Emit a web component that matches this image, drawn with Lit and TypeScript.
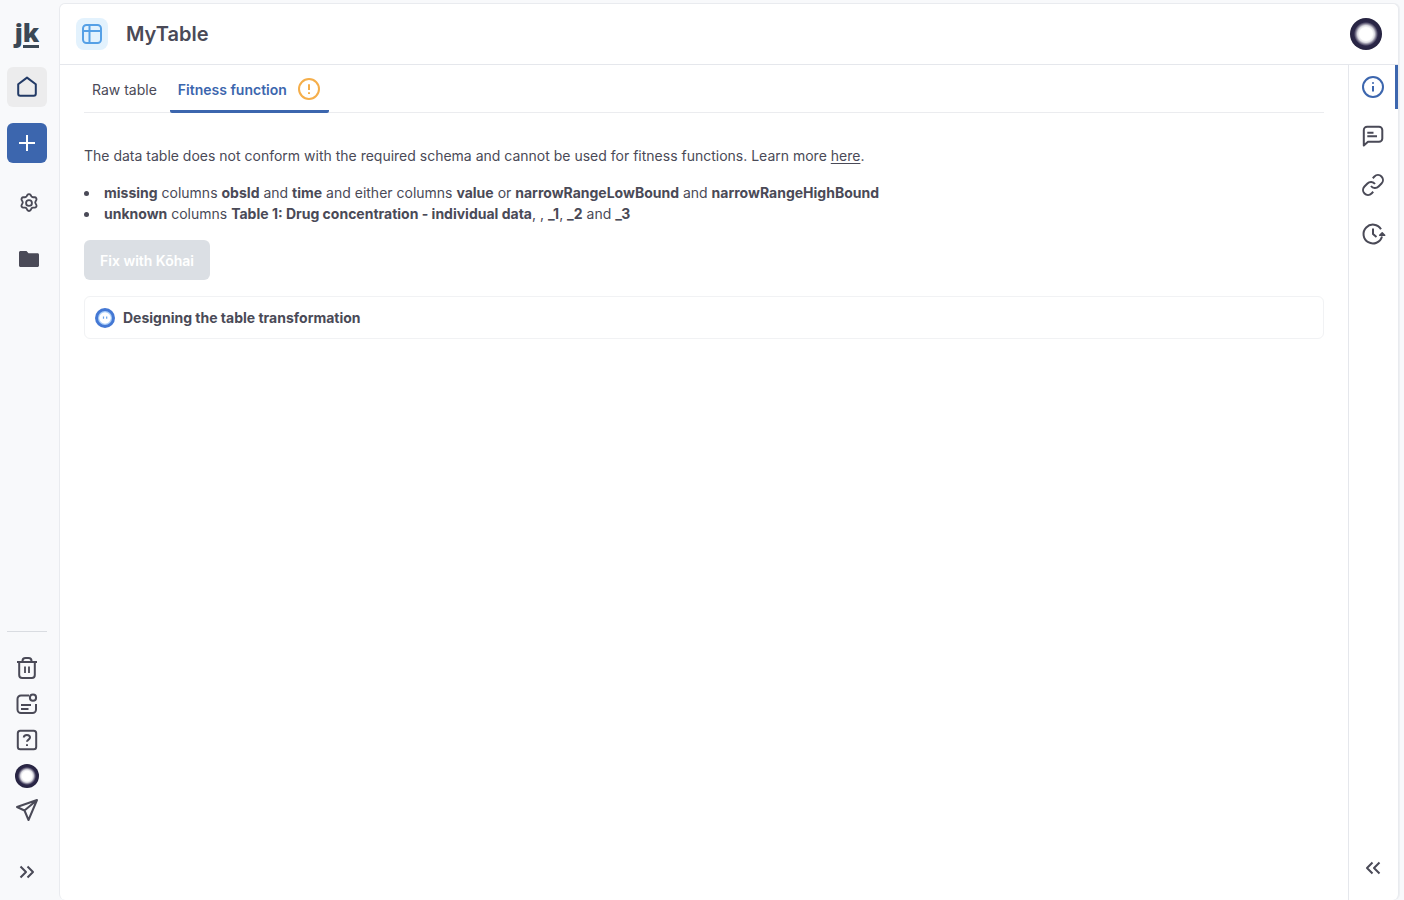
import { LitElement, html, css, svg } from "lit";
import { customElement, property } from "lit/decorators.js";

const icons: Record<string, unknown> = {
  home: svg`<path d="M3.200 9.200 12 2.600l8.800 6.600v9.600a2 2 0 0 1-2 2H5.200a2 2 0 0 1-2-2z"/>`,
  plus: svg`<path d="M12 4v16M4 12h16"/>`,
  gear: svg`<circle cx="12" cy="12" r="3.200"/><path d="M10.200 3.300a2.100 2.100 0 0 1 3.600 0l.8 1.400a2.100 2.100 0 0 0 1.900 1h1.600a2.100 2.100 0 0 1 1.800 3.200l-.8 1.400a2.100 2.100 0 0 0 0 2.100l.9 1.600a2.100 2.100 0 0 1-1.900 3.100h-1.600a2.100 2.100 0 0 0-1.900 1l-.8 1.600a2.100 2.100 0 0 1-3.600 0l-.8-1.600a2.100 2.100 0 0 0-1.900-1H5.900A2.100 2.100 0 0 1 4 14l.9-1.600a2.100 2.100 0 0 0 0-2.100L4.100 8.900a2.100 2.100 0 0 1 1.800-3.200h1.600a2.100 2.100 0 0 0 1.900-1z"/>`,
  folder: svg`<path fill="currentColor" stroke="none" d="M2 5.500C2 4.700 2.700 4 3.500 4H9.500l2 2.200h9c.9 0 1.500.7 1.500 1.500v10.800c0 .8-.7 1.500-1.500 1.500h-17C2.700 20 2 19.300 2 18.500z"/>`,
  trash: svg`<path d="M2 6h20M4.200 6v13a3 3 0 0 0 3 3h9.600a3 3 0 0 0 3-3V6M7.500 5.500V5a3 3 0 0 1 3-3h3a3 3 0 0 1 3 3v.5"/><path stroke-width="1.800" d="M10 10.500v6.500M14 10.500v6.500"/>`,
  news: svg`<path d="M14 3.500H6a3.500 3.500 0 0 0-3.500 3.500V17.500A3.500 3.500 0 0 0 6 21h11.500A3.500 3.500 0 0 0 21 17.500V12M6 13h10M6 17h7.500"/><circle cx="18" cy="5.700" r="3.100"/>`,
  help: svg`<rect x="2.800" y="2.800" width="18.400" height="18.400" rx="2.500"/><path d="M8.800 9.600c0-1.600 1.300-2.600 3.100-2.600s3.100 1.100 3.100 2.500c0 2.200-3 2-3 4.300"/><path d="M12 16.200v1.900"/>`,
  send: svg`<path d="M2 9 22 2l-8.500 20-4-9.500zM9.500 12.500 22 2"/>`,
  right: svg`<path d="m5.500 6.500 5.500 5.500-5.500 5.500M12.500 6.500l5.500 5.500-5.500 5.500"/>`,
  left: svg`<path d="m11.500 6.500-5.500 5.500 5.500 5.500M18.500 6.500l-5.500 5.500 5.500 5.500"/>`,
  info: svg`<circle cx="12" cy="12" r="10"/><path d="M12 11v5.500M12 7.300v1.500"/>`,
  comment: svg`<path d="M2.800 21.500V6A3.300 3.300 0 0 1 6.100 2.700h11.900A3.300 3.300 0 0 1 21.300 6v8.500a3.300 3.300 0 0 1-3.300 3.300H7zM6.300 8.800h6.200M6.300 12.300h9.700"/>`,
  link: svg`<path d="M10 13a5 5 0 0 0 7.540.54l3-3a5 5 0 0 0-7.070-7.070l-1.720 1.710"/><path d="M14 11a5 5 0 0 0-7.540-.54l-3 3a5 5 0 0 0 7.070 7.070l1.710-1.710"/>`,
  history: svg`<path d="M20 7.200A9.400 9.400 0 1 0 21 14.500"/><path d="M12 6.500V12l3.500 3"/><path d="M18.700 13.200 21.200 10.800l2.500 2.400z" fill="currentColor" stroke-width="1.500"/>`,
  table: svg`<rect x="3" y="3" width="18" height="18" rx="3.500"/><path d="M3 9h18M9.500 3v18"/>`,
  alert: svg`<circle cx="12" cy="12" r="10"/><path d="M12 7.200v5.800M12 15.300v1.700"/>`,
};

@customElement("app-icon")
export class AppIcon extends LitElement {
  @property() name = "";
  static styles = css`
    :host { display: block; flex: none; width: 24px; height: 24px; }
    svg { display: block; width: 100%; height: 100%; overflow: visible; stroke-width: 2; }
  `;
  render() {
    return html`<svg viewBox="0 0 24 24" fill="none" stroke="currentColor"
      stroke-linejoin="round" aria-hidden="true">${icons[this.name]}</svg>`;
  }
}

@customElement("app-root")
export class AppRoot extends LitElement {
  static styles = css`
    :host {
      display: flex;
      box-sizing: border-box;
      min-height: 100vh;
      padding: 3px 5px 0 0;
      background: #f8f9fb;
      color: #4a4a57;
      font: 14px/21px Inter, sans-serif;
    }
    * { box-sizing: border-box; }
    button {
      display: flex; align-items: center; justify-content: center; flex: none;
      padding: 0; border: 0; background: none; color: inherit; font: inherit; cursor: pointer;
    }
    .side {
      display: flex; flex-direction: column; width: 59px; flex: none;
      padding: 16px 12px 16px 7px;
    }
    .logo {
      display: flex; justify-content: center; height: 32px; margin-bottom: 16px;
      font: 800 25px/26px "Open Sans", sans-serif; color: #3b4855;
    }
    .k { height: 29px; border-bottom: 3px solid #3b4855; }
    .square { width: 40px; height: 40px; border-radius: 6px; }
    .home { background: #ececed; color: #223a66; }
    .add { margin: 16px 0 20px; background: #3c66ae; color: #fff; }
    .small { width: 40px; height: 40px; margin-bottom: 16px; padding-left: 4px; }
    .gear { width: 22px; height: 22px; }
    .tools {
      display: flex; flex-direction: column; align-items: center; gap: 12px;
      margin-top: auto; padding-top: 24px; border-top: 1px solid #d9dce1;
    }
    .send { height: 20px; }
    .more { margin-top: 28px; }
    .avatar {
      width: 24px; height: 24px; border-radius: 50%;
      background: radial-gradient(closest-side, #fff 40%, #dcdce2 53%, #77738a 65%, #2c2849 75%, #25223f 100%);
    }
    .panel {
      display: flex; flex-direction: column; flex: 1; min-width: 0;
      border: 1px solid #e9ebef; border-bottom: 0; border-radius: 6px; background: #fff;
      box-shadow: 1px 0 #eef0f3;
    }
    .head {
      display: flex; align-items: center; height: 61px; padding: 0 16px;
      border-bottom: 1px solid #e5e7ec;
    }
    .badge {
      display: grid; place-items: center; width: 32px; height: 32px; border-radius: 8px;
      background: #e3f2fd; color: #55a0e6;
    }
    h1 { flex: 1; margin: 0 0 0 18px; font-size: 20px; line-height: 28px; font-weight: 600; }
    .head .avatar { width: 32px; height: 32px; }
    .body { display: flex; flex: 1; }
    main { flex: 1; min-width: 0; padding: 0 24px; }
    .tabs { display: flex; height: 48px; border-bottom: 1px solid #ebecef; }
    .tab { height: 48px; padding: 4px 8px 0; gap: 10px; border-bottom: 3px solid transparent; }
    .tab.on { margin-left: 5px; border-color: #3c66ae; border-radius: 2px; color: #3c66ae; font-weight: 600; }
    .alert { margin-bottom: 2px; color: #f5ae4a; }
    p { margin: 32px 0 16px; }
    a { color: inherit; text-underline-offset: 2px; }
    ul { margin: 0 0 16px; padding: 0; list-style-position: inside; }
    b { font-weight: 700; }
    .fix { height: 40px; padding: 0 16px; border-radius: 6px; background: #dbdfe4; color: #fff; font-weight: 600; }
    .task {
      display: flex; align-items: center; gap: 8px; margin-top: 16px; height: 43px; padding: 0 10px;
      border: 1px solid #f1f2f4; border-radius: 6px; font-weight: 700;
    }
    .kohai { width: 20px; height: 20px; }
    .rail {
      display: flex; flex-direction: column; align-items: stretch; width: 50px; flex: none;
      padding-bottom: 20px; border-left: 1px solid #e5e7ec;
    }
    .rail button { height: 44px; margin-bottom: 5px; padding-right: 1px; }
    .rail .info { color: #3c66ae; border-right: 3px solid #3c66ae; padding: 0 0 0 2px; }
    .rail .collapse { height: 24px; margin: auto 0 0; }
  `;

  render() {
    return html`
      <nav class="side" aria-label="Main">
        <div class="logo"><span>j</span><span class="k">k</span></div>
        <button class="square home" aria-label="Home"><app-icon name="home"></app-icon></button>
        <button class="square add" aria-label="Add"><app-icon name="plus"></app-icon></button>
        <button class="small" aria-label="Settings"><app-icon class="gear" name="gear"></app-icon></button>
        <button class="small" aria-label="Files"><app-icon name="folder"></app-icon></button>
        <div class="tools">
          <button aria-label="Trash"><app-icon name="trash"></app-icon></button>
          <button aria-label="News"><app-icon name="news"></app-icon></button>
          <button aria-label="Help"><app-icon name="help"></app-icon></button>
          <button class="avatar" aria-label="Profile"></button>
          <button class="send" aria-label="Send feedback"><app-icon name="send"></app-icon></button>
          <button class="more" aria-label="Expand"><app-icon name="right"></app-icon></button>
        </div>
      </nav>
      <div class="panel">
        <header class="head">
          <span class="badge"><app-icon name="table"></app-icon></span>
          <h1>MyTable</h1>
          <button class="avatar" aria-label="Account"></button>
        </header>
        <div class="body">
          <main>
            <div class="tabs" role="tablist">
              <button class="tab" role="tab" aria-selected="false">Raw table</button>
              <button class="tab on" role="tab" aria-selected="true">Fitness function<app-icon class="alert" name="alert"></app-icon></button>
            </div>
            <p>The data table does not conform with the required schema and cannot be used for fitness functions. Learn more <a href="#">here</a>.</p>
            <ul>
              <li><b>missing</b> columns <b>obsId</b> and <b>time</b> and either columns <b>value</b> or <b>narrowRangeLowBound</b> and <b>narrowRangeHighBound</b></li>
              <li><b>unknown</b> columns <b>Table 1: Drug concentration - individual data</b>, , <b>_1</b>, <b>_2</b> and <b>_3</b></li>
            </ul>
            <button class="fix" disabled>Fix with Kōhai</button>
            <div class="task">
              <svg class="kohai" viewBox="0 0 20 20" aria-hidden="true">
                <circle cx="10" cy="10" r="10" fill="#4478d4"/>
                <circle cx="10" cy="10" r="7" fill="#a9cdf8"/>
                <circle cx="10" cy="10" r="5.800" fill="#fff"/>
                <path d="M8.500 8.500v2.200M11.700 8.500v2.200" stroke="#68a4ec" stroke-width="1.200"/>
              </svg>
              <span>Designing the table transformation</span>
            </div>
          </main>
          <aside class="rail">
            <button class="info" aria-label="Info"><app-icon name="info"></app-icon></button>
            <button aria-label="Comments"><app-icon name="comment"></app-icon></button>
            <button aria-label="Links"><app-icon name="link"></app-icon></button>
            <button aria-label="History"><app-icon name="history"></app-icon></button>
            <button class="collapse" aria-label="Collapse"><app-icon name="left"></app-icon></button>
          </aside>
        </div>
      </div>
    `;
  }
}
